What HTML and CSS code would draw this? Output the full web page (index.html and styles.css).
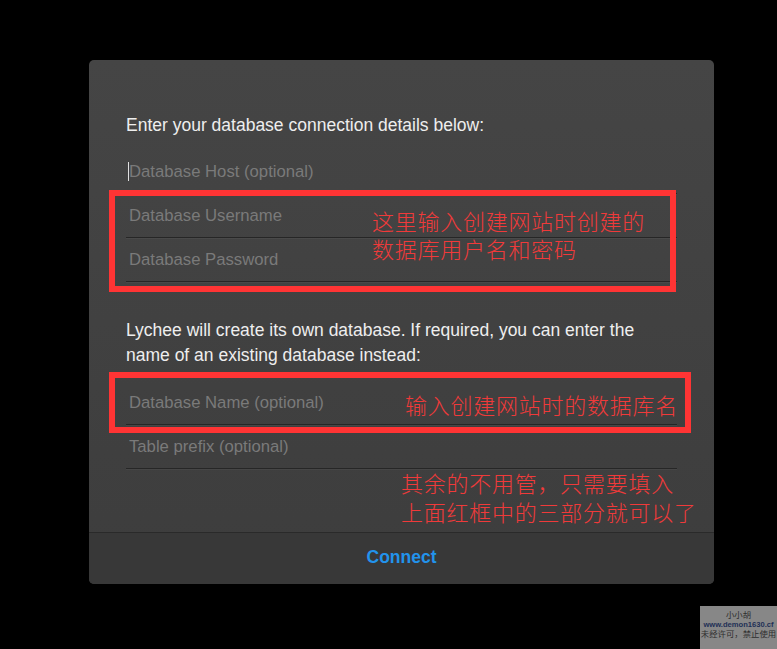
FILE: index.html
```html
<!DOCTYPE html>
<html lang="zh-CN">
<head>
<meta charset="utf-8">
<title>Lychee Setup</title>
<link rel="stylesheet" href="styles.css">
</head>
<body>
<div class="modal">
  <div class="content">
    <p class="text">Enter your database connection details below:</p>
    <div class="field"><span class="caret"></span><input type="text" placeholder="Database Host (optional)"></div>
    <div class="field"><input type="text" placeholder="Database Username"></div>
    <div class="field"><input type="password" placeholder="Database Password"></div>
    <p class="text second">Lychee will create its own database. If required, you can enter the name of an existing database instead:</p>
    <div class="field"><input type="text" placeholder="Database Name (optional)"></div>
    <div class="field"><input type="text" placeholder="Table prefix (optional)"></div>
  </div>
  <div class="buttons"><a class="connect">Connect</a></div>

  <div class="redbox box1"></div>
  <div class="redbox box2"></div>
  <div class="note note1">这里输入创建网站时创建的<br>数据库用户名和密码</div>
  <div class="note note2">输入创建网站时的数据库名</div>
  <div class="note note3">其余的不用管，只需要填入<br>上面红框中的三部分就可以了</div>
</div>
<div class="watermark">
  <div>小小胡</div>
  <div class="url">www.demon1630.cf</div>
  <div>未经许可，禁止使用</div>
</div>
</body>
</html>
```
FILE: styles.css
```css
html, body {
  margin: 0;
  padding: 0;
  background: #000;
  height: 100%;
  overflow: hidden;
}
body {
  font-family: "Liberation Sans", Arial, "Noto Sans CJK SC", sans-serif;
}
.modal {
  position: relative;
  margin: 60px 0 0 89px;
  width: 625px;
  height: 524px;
  border-radius: 5px;
  background: linear-gradient(to bottom, #454545 0%, #3d3d3d 100%);
  display: flex;
  flex-direction: column;
  overflow: hidden;
}
.content {
  height: 472px;
  box-sizing: border-box;
  padding: 53px 37px 0 37px;
}
.text {
  margin: 0;
  font-size: 17.5px;
  line-height: 24px;
  color: #eeeeee;
}
.text.second {
  margin-top: 36px;
  margin-bottom: 13px;
  line-height: 25px;
}
.text:first-child {
  margin-bottom: 13px;
}
.field {
  position: relative;
  height: 44px;
  border-bottom: 1px solid #262626;
  box-shadow: 0 1px 0 rgba(255,255,255,0.04);
  box-sizing: border-box;
}
.field input {
  width: 100%;
  height: 43px;
  border: 0;
  outline: 0;
  background: transparent;
  padding: 0 0 0 3px;
  margin: 0;
  font-family: "Liberation Sans", Arial, sans-serif;
  font-size: 16.7px;
  color: #fff;
  box-sizing: border-box;
}
.field input::placeholder {
  color: #7a7a7a;
}
.caret {
  position: absolute;
  left: 2px;
  top: 12px;
  width: 1px;
  height: 19px;
  background: #e0e0e0;
}
.buttons {
  flex: 1;
  border-top: 1px solid #2a2a2a;
  background: #383838;
  display: flex;
  align-items: center;
  justify-content: center;
}
.connect {
  font-size: 17.5px;
  font-weight: bold;
  color: #2293ec;
  margin-top: -2px;
}
.redbox {
  position: absolute;
  border: 6px solid #ff3434;
  box-sizing: border-box;
}
.box1 {
  left: 20px;
  top: 130px;
  width: 567px;
  height: 102px;
}
.box2 {
  left: 20px;
  top: 312px;
  width: 582px;
  height: 61px;
}
.note {
  position: absolute;
  font-family: "Noto Sans CJK SC", sans-serif;
  font-weight: 300;
  font-size: 22px;
  letter-spacing: 0.75px;
  color: #f03a3a;
  white-space: nowrap;
}
.note1 {
  left: 283px;
  top: 146px;
  line-height: 28px;
}
.note2 {
  left: 316px;
  top: 330px;
  line-height: 28px;
}
.note3 {
  left: 312px;
  top: 408px;
  line-height: 29px;
}
.watermark {
  position: fixed;
  left: 700px;
  top: 606px;
  width: 77px;
  height: 43px;
  background: #878787;
  font-family: "Noto Sans CJK SC", sans-serif;
  font-size: 8.4px;
  line-height: 9.5px;
  color: #2e2e2e;
  text-align: center;
  padding-top: 4px;
  box-sizing: border-box;
  white-space: nowrap;
}
.watermark .url {
  color: #1f3056;
  font-family: "Liberation Sans", Arial, sans-serif;
  font-weight: bold;
  font-size: 7.6px;
}
```
